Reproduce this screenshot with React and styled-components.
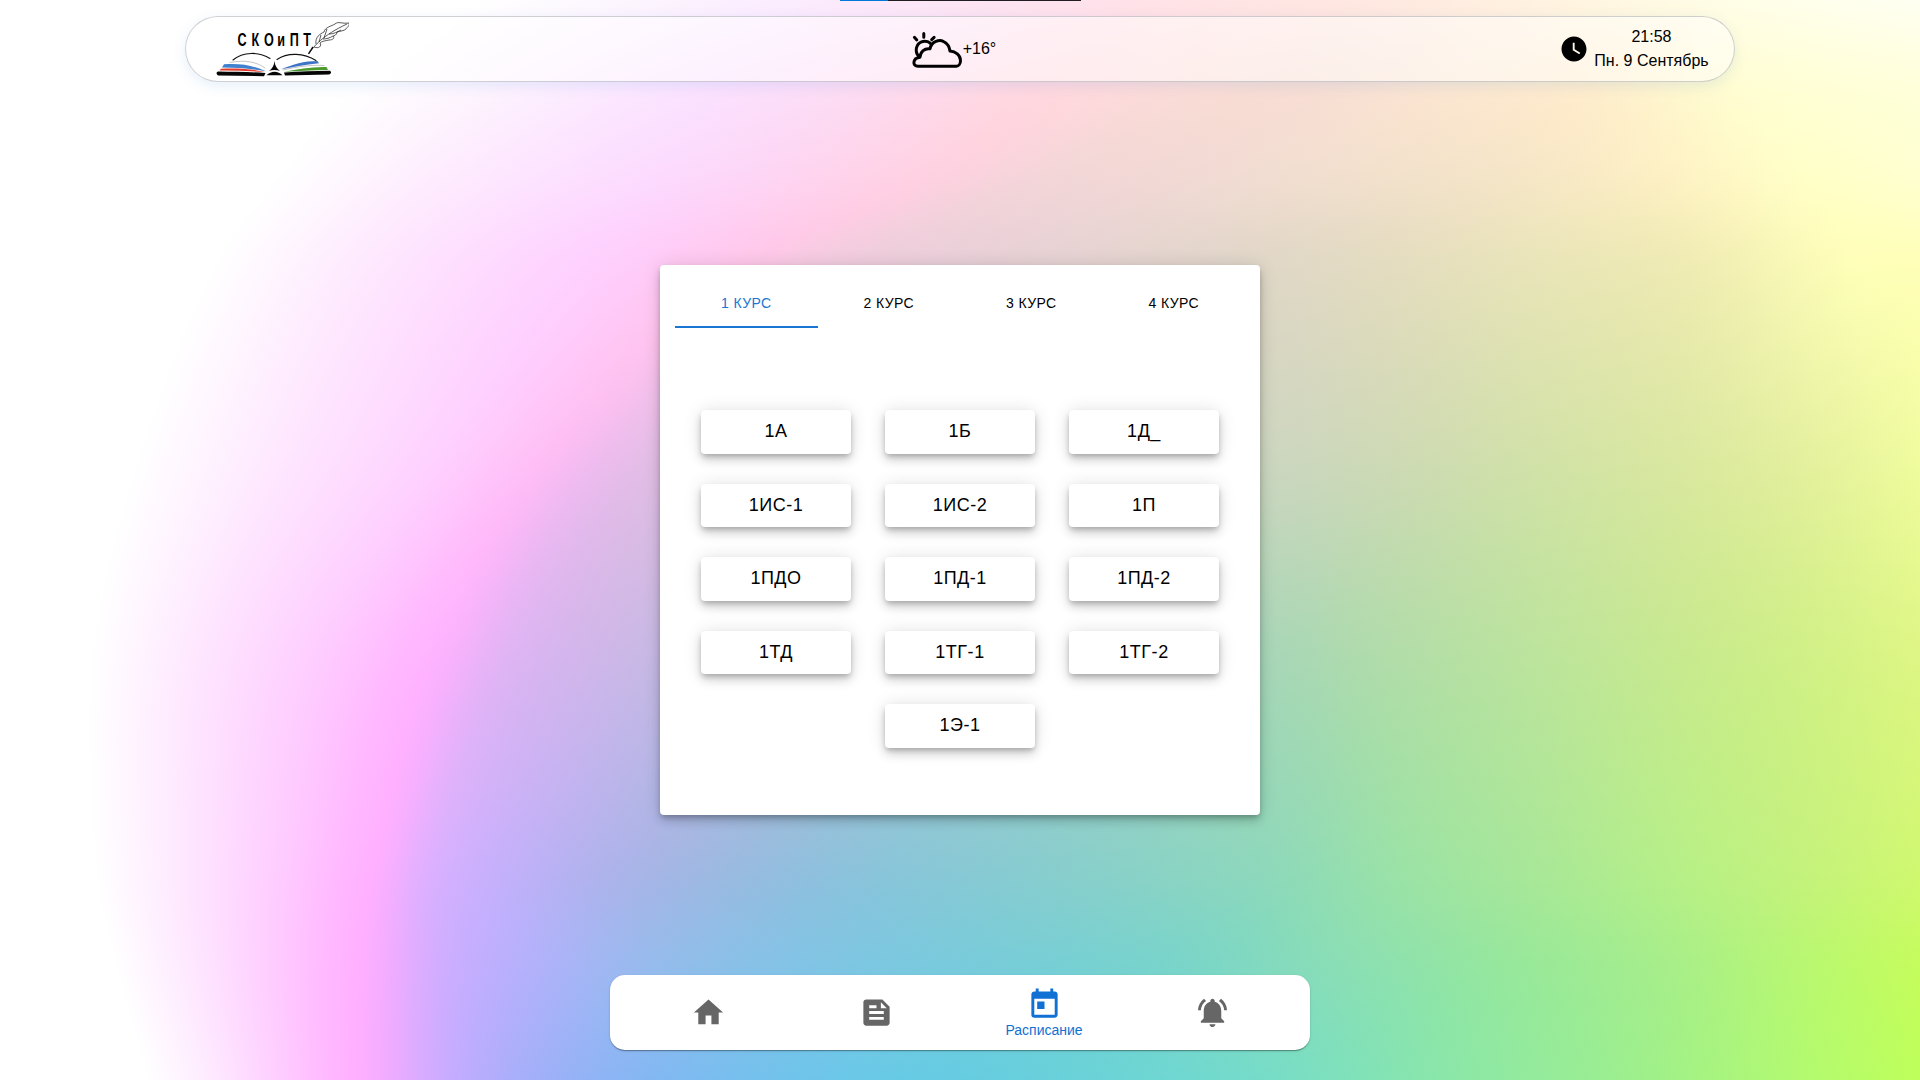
import React from "react";
import styled, { createGlobalStyle } from "styled-components";
import {
  MdFeed,
  MdHome,
  MdNotificationsActive,
  MdToday,
  MdWatchLater,
} from "react-icons/md";

/* Colour field of the wallpaper: every row lists the same sequence of stops
   [x, r, g, b]; rows in between follow a smooth curve, positions included. */
const FIELD = [
  { y: 0, stops: [[470,255,255,255],[620,252,246,254],[820,251,235,253],[1080,254,226,236],[1180,255,227,230],[1260,255,229,228],[1340,255,231,226],[1420,255,235,225],[1500,255,240,225],[1580,255,245,225],[1650,255,249,227],[1700,255,252,229],[1750,255,254,232],[1920,255,255,242]] },
  { y: 90, stops: [[350,255,255,255],[490,253,243,254],[720,251,225,254],[1030,255,216,224],[1110,253,218,220],[1190,250,220,215],[1260,248,221,212],[1330,248,223,212],[1410,250,228,210],[1490,252,232,208],[1580,254,236,205],[1650,254,243,206],[1740,255,253,210],[1920,255,255,218]] },
  { y: 175, stops: [[278,255,255,255],[430,254,237,254],[660,252,218,254],[920,255,209,226],[985,249,211,221],[1050,243,214,216],[1150,242,216,213],[1250,241,220,210],[1360,242,224,205],[1480,244,228,200],[1570,248,233,197],[1670,253,241,196],[1805,255,255,200],[1920,255,255,208]] },
  { y: 260, stops: [[215,255,255,255],[360,254,234,254],[585,254,209,254],[745,255,200,235],[810,246,203,226],[880,238,205,220],[980,232,208,215],[1100,229,211,209],[1260,225,215,200],[1400,229,221,192],[1520,233,228,186],[1690,240,236,180],[1850,254,255,185],[1920,255,255,185]] },
  { y: 459, stops: [[136,255,255,255],[280,254,231,255],[440,254,208,255],[543,254,190,245],[600,238,188,238],[660,226,190,228],[800,214,196,216],[1000,206,205,205],[1265,204,214,192],[1400,206,218,180],[1540,210,226,168],[1680,218,232,160],[1800,228,240,158],[1920,240,252,158]] },
  { y: 658, stops: [[91,255,255,255],[204,254,229,255],[330,254,202,255],[430,255,179,255],[505,224,180,244],[590,208,182,234],[800,180,192,216],[1000,171,204,203],[1265,168,214,184],[1380,176,220,170],[1540,188,228,156],[1690,200,234,142],[1800,208,240,135],[1920,222,246,132]] },
  { y: 869, stops: [[95,255,255,255],[188,254,230,255],[290,254,201,255],[374,255,176,255],[430,220,176,255],[500,197,176,251],[655,166,181,229],[890,137,197,217],[1265,142,216,187],[1400,155,226,166],[1550,170,232,150],[1690,184,240,134],[1800,196,242,124],[1920,208,248,112]] },
  { y: 965, stops: [[115,255,255,255],[190,254,232,255],[277,254,203,255],[362,255,175,255],[440,208,173,255],[535,178,177,250],[655,149,187,236],[870,124,199,225],[1150,120,211,204],[1340,138,222,181],[1500,150,231,157],[1665,167,238,138],[1800,184,247,114],[1920,197,252,93]] },
  { y: 1080, stops: [[148,255,255,255],[210,254,234,255],[285,254,203,255],[358,255,175,255],[450,198,172,255],[540,160,176,248],[655,130,184,242],[850,106,200,232],[1000,102,206,222],[1265,118,220,200],[1450,139,231,168],[1650,159,240,138],[1800,178,250,112],[1920,190,255,90]] },
];

const STEP = 3;
const SUBDIVISIONS = 3;

/* Hermite curve through p1 and p2; x0..x3 are the knots of the four points. */
const curve = (p0, p1, p2, p3, x0, x1, x2, x3, t) => {
  const h = x2 - x1;
  const m1 = x2 === x0 ? 0 : ((p2 - p0) / (x2 - x0)) * h;
  const m2 = x3 === x1 ? 0 : ((p3 - p1) / (x3 - x1)) * h;
  const t2 = t * t;
  const t3 = t2 * t;
  return (
    (2 * t3 - 3 * t2 + 1) * p1 +
    (t3 - 2 * t2 + t) * m1 +
    (3 * t2 - 2 * t3) * p2 +
    (t3 - t2) * m2
  );
};

const rowAt = (y) => {
  const last = FIELD.length - 1;
  const i = Math.max(1, FIELD.findIndex((row) => row.y >= y));
  const a = FIELD[Math.max(0, i - 2)];
  const b = FIELD[i - 1];
  const c = FIELD[i];
  const d = FIELD[Math.min(last, i + 1)];
  const t = (y - b.y) / (c.y - b.y);
  return b.stops.map((stop, n) =>
    stop.map((v, k) =>
      curve(a.stops[n][k], v, c.stops[n][k], d.stops[n][k], a.y, b.y, c.y, d.y, t),
    ),
  );
};

const channel = (v) => Math.min(255, Math.max(0, v)).toFixed(1);

const stopsAt = (y) => {
  const row = rowAt(y);
  const out = [];
  for (let n = 0; n < row.length - 1; n += 1) {
    const a = row[Math.max(0, n - 1)];
    const b = row[n];
    const c = row[n + 1];
    const d = row[Math.min(row.length - 1, n + 2)];
    for (let s = 0; s < SUBDIVISIONS; s += 1) {
      const t = s / SUBDIVISIONS;
      const x = b[0] + (c[0] - b[0]) * t;
      const rgb = [1, 2, 3].map((k) =>
        channel(curve(a[k], b[k], c[k], d[k], a[0], b[0], c[0], d[0], t)),
      );
      out.push(`rgb(${rgb.join(" ")}) ${x.toFixed(1)}px`);
    }
  }
  const [x, ...rgb] = row[row.length - 1];
  out.push(`rgb(${rgb.map(channel).join(" ")}) ${x.toFixed(1)}px`);
  return out.join(",");
};

const wallpaper = Array.from({ length: 1080 / STEP }, (_, i) => {
  const y = i * STEP;
  return `linear-gradient(90deg, ${stopsAt(y + STEP / 2)}) 0 ${y}px / 100% ${STEP}px no-repeat`;
}).join(",");

const GlobalStyle = createGlobalStyle`
  *, *::before, *::after { box-sizing: border-box; }
  html, body { margin: 0; padding: 0; }
  body { overflow: hidden; }
`;

const Page = styled.div`
  width: 1920px;
  height: 1080px;
  display: flex;
  flex-direction: column;
  align-items: center;
  background: ${wallpaper};
  color: #000;
  font-family: "Liberation Sans", Arial, Helvetica, sans-serif;
  font-size: 16px;
`;

const Progress = styled.div`
  width: 241px;
  height: 1px;
  margin-left: 1px;
  display: flex;
  background: #201c22;
`;

const ProgressFill = styled.div`
  width: 48px;
  background: #0078d7;
`;

const Header = styled.header`
  width: 1550px;
  height: 66px;
  margin-top: 15px;
  padding: 0 23px 0 30px;
  display: flex;
  align-items: center;
  justify-content: space-between;
  border: 1px solid rgba(190, 192, 196, 0.75);
  border-radius: 33px;
  background: rgba(255, 255, 255, 0.5);
  background-clip: padding-box;
  box-shadow: 0 4px 14px rgba(0, 110, 220, 0.1);
`;

const LogoArt = styled.svg`
  width: 133px;
  height: 60px;
`;

const LogoText = styled.text`
  font-family: "Liberation Sans", Arial, sans-serif;
  font-size: 18px;
  font-weight: 700;
`;

const Weather = styled.div`
  display: flex;
  align-items: center;
  line-height: 24px;
`;

const WeatherArt = styled.svg`
  width: 51px;
  height: 50px;
`;

const Clock = styled.div`
  display: flex;
  align-items: center;
  gap: 4px;
`;

const ClockText = styled.div`
  display: flex;
  flex-direction: column;
  align-items: center;
  width: 117px;
  margin-right: 1px;
  line-height: 24px;
  white-space: nowrap;
`;

const Card = styled.main`
  width: 600px;
  height: 550px;
  margin-top: 183px;
  padding: 15px;
  border-radius: 4px;
  background: #fff;
  box-shadow:
    0 3px 5px -1px rgba(0, 0, 0, 0.2),
    0 6px 10px 0 rgba(0, 0, 0, 0.14),
    0 1px 18px 0 rgba(0, 0, 0, 0.12);
`;

const Tabs = styled.div`
  display: grid;
  grid-template-columns: repeat(4, 1fr);
  height: 48px;
`;

const Tab = styled.button`
  padding: 2px 0 0;
  border: 0;
  border-bottom: 2px solid ${(p) => (p.$active ? "#1976d2" : "transparent")};
  background: none;
  color: ${(p) => (p.$active ? "#1976d2" : "#000")};
  font: inherit;
  font-size: 14px;
  line-height: 17.5px;
  letter-spacing: 0.02857em;
`;

const Groups = styled.div`
  display: flex;
  flex-wrap: wrap;
  justify-content: center;
  gap: 30px 34px;
  padding-top: 82px;
`;

const GroupButton = styled.button`
  width: 150px;
  height: 43.5px;
  padding: 6px 16px;
  border: 0;
  border-radius: 4px;
  background: #fff;
  color: #000;
  font: inherit;
  font-size: 18px;
  line-height: 31.5px;
  letter-spacing: 0.02857em;
  box-shadow:
    0 3px 5px -1px rgba(0, 0, 0, 0.2),
    0 6px 10px 0 rgba(0, 0, 0, 0.14),
    0 1px 18px 0 rgba(0, 0, 0, 0.12);
`;

const BottomNav = styled.nav`
  width: 700px;
  height: 75px;
  margin-top: 160px;
  display: flex;
  justify-content: center;
  border-radius: 15px;
  background: #fff;
  box-shadow:
    0 2px 1px -1px rgba(0, 0, 0, 0.2),
    0 1px 1px 0 rgba(0, 0, 0, 0.14),
    0 1px 3px 0 rgba(0, 0, 0, 0.12);
`;

const NavItem = styled.button`
  width: 168px;
  padding: 0;
  border: 0;
  display: flex;
  flex-direction: column;
  align-items: center;
  justify-content: center;
  background: none;
  color: ${(p) => (p.$active ? "#1170d4" : "#666")};
  font: inherit;
  font-size: 14px;
  line-height: 16px;
`;

function Logo() {
  return (
    <LogoArt viewBox="216 19 133 60" aria-label="СКОиПТ">
      <g transform="scale(0.7 1)">
        <LogoText x="339.4 359.2 377.1 396 413.9 433.3" y="46.3">СКОиПТ</LogoText>
      </g>
      <g fill="none" strokeLinecap="round">
        <path d="M233 60C243 51.5 259 51.5 270 58.500" stroke="#111" strokeWidth="1.1" />
        <path d="M277 59.500C288 52 304 53 316 60.500" stroke="#111" strokeWidth="1.1" />
        <path d="M230 62.500C245 59.500 257 62 265 68" stroke="#aaa" strokeWidth="0.7" />
        <path d="M283 70C296 67 310 64.500 324 65.500" stroke="#aaa" strokeWidth="0.7" />
      </g>
      <path d="M224 64.300C240 63 254 65.500 266 71.300C252 69 238 67.600 222 67.600Z" fill="#3f80cf" />
      <path d="M221 68.800C240 68 254 69.400 265 72C250 71.300 235 70.400 219.500 70.600Z" fill="#e23b2c" />
      <path d="M281 69.300C293 64.500 304 61 317.500 61L319 63.300C305 64.500 292 67.500 281 69.300Z" fill="#3f73c8" />
      <path d="M284 71.700C298 69 312 66.600 326.500 67L328 70C313 70 298 71.300 284 71.700Z" fill="#4b9a2d" />
      <path d="M218 71.500C234 71.800 250 71.800 265.500 73L264 76.200L218 75.500Q215 73 218 71.500Z" fill="#050505" />
      <path d="M284 72.600C300 71.600 315 70.800 330 70.800Q332.500 73 329 74.500L285 75.500Z" fill="#050505" />
      <path d="M274.500 61C275 66 277 69 280 70.700C276 69.700 272.500 69.700 269 70.700C272 69 274 66 274.500 61Z" fill="#050505" />
      <path d="M266.500 75.300C271 70.500 278 70.500 282.500 75.300Z" fill="#050505" />
      <g fill="none" stroke="#222" strokeWidth="0.75" strokeLinejoin="round">
        <path d="M309 53.500C313 47 323 35 347 24" />
        <path d="M316 44C315 37 320 34 324 32C325 27 332 26 335 24C338 21 342 24 349 23C350 26 347 27 346 29C344 31 340 31 337 32C337 35 334 36 333 36C335 38 333 40 329 40C325 41 322 41 320 43C322 46 319 49 314 47" />
        <path d="M319 42L321 35M324 38L327 29M323 39C326 39 330 38 333 36M329 34C334 34 337 32 341 30" />
      </g>
      <path d="M308.500 53.800L313 47" stroke="#111" strokeWidth="1.400" />
    </LogoArt>
  );
}

function WeatherIcon() {
  return (
    <WeatherArt
      viewBox="911.500 24 51 50"
      fill="none"
      stroke="#000"
      strokeWidth="3"
      strokeLinecap="round"
      strokeLinejoin="round"
    >
      <path d="M923.300 33.600V37.300M913.900 37.300L916.300 40M933.600 37.300L931.200 39.600" />
      <path d="M918 56C914 51.500 915.500 44 921 41.800C925.500 40 929.500 42.200 931 45" />
      <path d="M917.500 66.200C911.500 66.200 912 58 919.500 57.200C920 51.500 924 48 929.500 48.800C931 40.500 939.500 39.500 943 41.500C947 43.500 949 47 949.500 51C955 51.500 960 55 960 60.500C960 64 958 66.200 956 66.200Z" />
    </WeatherArt>
  );
}

const COURSES = ["1 КУРС", "2 КУРС", "3 КУРС", "4 КУРС"];

const GROUPS = [
  "1А", "1Б", "1Д_",
  "1ИС-1", "1ИС-2", "1П",
  "1ПДО", "1ПД-1", "1ПД-2",
  "1ТД", "1ТГ-1", "1ТГ-2",
  "1Э-1",
];

const NAV = [
  { Icon: MdHome },
  { Icon: MdFeed },
  { Icon: MdToday, label: "Расписание" },
  { Icon: MdNotificationsActive },
];

export default function App() {
  return (
    <Page>
      <GlobalStyle />
      <Progress>
        <ProgressFill />
      </Progress>
      <Header>
        <Logo />
        <Weather>
          <WeatherIcon />
          <span>+16°</span>
        </Weather>
        <Clock>
          <MdWatchLater size={30} />
          <ClockText>
            <span>21:58</span>
            <span>Пн. 9 Сентябрь</span>
          </ClockText>
        </Clock>
      </Header>
      <Card>
        <Tabs>
          {COURSES.map((name, i) => (
            <Tab key={name} $active={i === 0}>{name}</Tab>
          ))}
        </Tabs>
        <Groups>
          {GROUPS.map((name) => (
            <GroupButton key={name}>{name}</GroupButton>
          ))}
        </Groups>
      </Card>
      <BottomNav>
        {NAV.map(({ Icon, label }, i) => (
          <NavItem key={i} $active={Boolean(label)}>
            <Icon size={35} />
            {label && <span>{label}</span>}
          </NavItem>
        ))}
      </BottomNav>
    </Page>
  );
}
